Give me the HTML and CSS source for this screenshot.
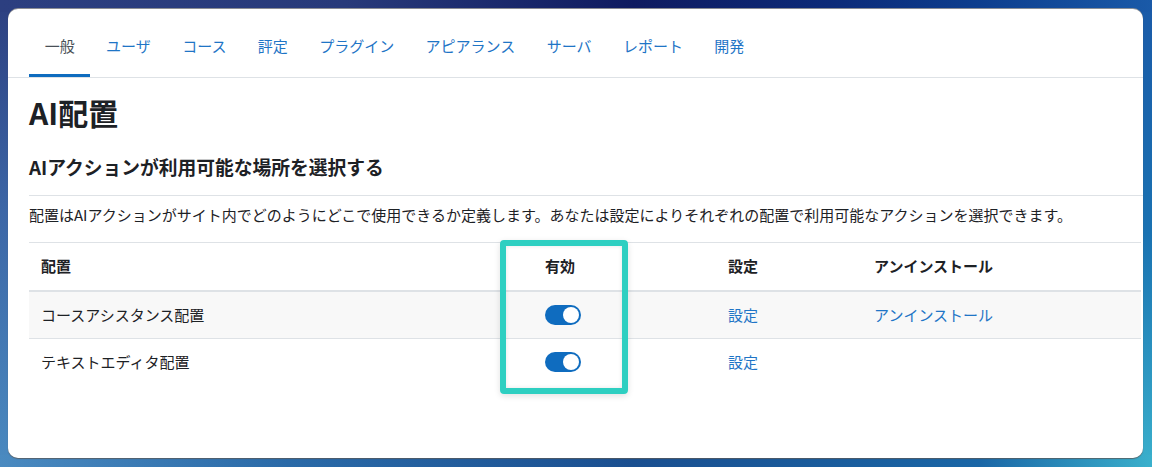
FILE: index.html
```html
<!DOCTYPE html>
<html lang="ja">
<head>
<meta charset="utf-8">
<title>AI配置</title>
<link rel="stylesheet" href="styles.css">
</head>
<body>
<div class="window">
  <nav class="tabs">
    <a class="tab active">一般</a>
    <a class="tab">ユーザ</a>
    <a class="tab">コース</a>
    <a class="tab">評定</a>
    <a class="tab">プラグイン</a>
    <a class="tab">アピアランス</a>
    <a class="tab">サーバ</a>
    <a class="tab">レポート</a>
    <a class="tab">開発</a>
  </nav>
  <main class="content">
    <h2 class="page-title">AI配置</h2>
    <h3 class="section-title">AIアクションが利用可能な場所を選択する</h3>
    <div class="desc">配置はAIアクションがサイト内でどのようにどこで使用できるか定義します。あなたは設定によりそれぞれの配置で利用可能なアクションを選択できます。</div>
    <div class="table-wrap">
      <table class="placements">
        <colgroup>
          <col class="c-name">
          <col class="c-enabled">
          <col class="c-settings">
          <col class="c-uninstall">
        </colgroup>
        <thead>
          <tr>
            <th>配置</th>
            <th class="center">有効</th>
            <th>設定</th>
            <th>アンインストール</th>
          </tr>
        </thead>
        <tbody>
          <tr class="stripe">
            <td>コースアシスタンス配置</td>
            <td class="center"><span class="switch"><span class="knob"></span></span></td>
            <td><a class="link">設定</a></td>
            <td><a class="link">アンインストール</a></td>
          </tr>
          <tr class="last">
            <td>テキストエディタ配置</td>
            <td class="center"><span class="switch"><span class="knob"></span></span></td>
            <td><a class="link">設定</a></td>
            <td></td>
          </tr>
        </tbody>
      </table>
      <div class="highlight"></div>
    </div>
  </main>
</div>
</body>
</html>
```
FILE: styles.css
```css
html, body {
  margin: 0;
  height: 467px;
  overflow: hidden;
}
body {
  box-sizing: border-box;
  padding: 9px 9px 9px 8px;
  font-family: "Noto Sans CJK JP", "Noto Sans", sans-serif;
  color: #1d2125;
  background-color: #2a5fa0;
  background-image:
    linear-gradient(90deg, #2c3f80 0%, #283a7a 30%, #0f1b60 55%, #0c2a78 72%, #0d3e8e 85%, #1a5aa8 100%),
    linear-gradient(90deg, #4a8ac0 0%, #2a6aa8 25%, #1a4f90 55%, #1a66a6 85%, #3ab0cc 100%),
    linear-gradient(180deg, #2c3f80 0%, #3c66a6 45%, #4a8ac0 100%),
    linear-gradient(180deg, #1a5aa8 0%, #1a72b2 50%, #3ab0cc 100%);
  background-size: 100% 12px, 100% 12px, 12px 100%, 12px 100%;
  background-position: top left, bottom left, left top, right top;
  background-repeat: no-repeat;
}
.window {
  box-sizing: border-box;
  height: 449px;
  background: #fff;
  border-radius: 10px;
  overflow: hidden;
  box-shadow: 0 -1px 0 rgba(150, 150, 150, 0.9), 0 1px 1px rgba(90, 90, 90, 0.8);
}

/* Tabs */
.tabs {
  display: flex;
  padding: 20px 0 0 21px;
  margin-top: 1px;
  border-bottom: 1px solid #dee2e6;
}
.tab {
  display: block;
  padding: 6px 15.7px 18px;
  font-size: 15px;
  line-height: 20px;
  color: #1f75c6;
  border-bottom: 3px solid transparent;
  white-space: nowrap;
}
.tab.active {
  color: #495057;
  border-bottom-color: #0f6cbf;
}

/* Content */
.content {
  padding-left: 21px;
}
.page-title {
  margin: 16px 0 0;
  font-size: 30px;
  line-height: 36px;
  font-weight: 700;
}
.section-title {
  margin: 25px 0 0;
  font-size: 18.75px;
  line-height: 24px;
  font-weight: 700;
}
.desc {
  margin-top: 16px;
  border-top: 1px solid #dee2e6;
  padding-top: 8px;
  font-size: 15px;
  line-height: 22px;
  white-space: nowrap;
}

/* Table */
.table-wrap {
  position: relative;
  margin-top: 16px;
}
.placements {
  width: 1112px;
  table-layout: fixed;
  border-collapse: collapse;
  font-size: 15px;
  line-height: 22px;
}
.c-name { width: 375px; }
.c-enabled { width: 312px; }
.c-settings { width: 146px; }
.c-uninstall { width: 279px; }
.placements th {
  text-align: left;
  font-weight: 700;
  padding: 12px 12px 13px;
  border-top: 1px solid #dee2e6;
  border-bottom: 2px solid #dee2e6;
  white-space: nowrap;
}
.placements td {
  height: 22px;
  padding: 12px;
  border-bottom: 1px solid #dee2e6;
  white-space: nowrap;
  vertical-align: middle;
}
.placements tr.last td {
  border-bottom: none;
}
.placements tr.stripe td {
  background: #f8f8f8;
}
.placements .center {
  text-align: center;
}
.link {
  color: #1f75c6;
}
.switch {
  display: inline-block;
  position: relative;
  width: 36px;
  height: 20px;
  margin: 1px 0 0 6px;
  border-radius: 10px;
  background: #0f6cbf;
  vertical-align: top;
}
.knob {
  position: absolute;
  top: 2px;
  right: 2px;
  width: 16px;
  height: 16px;
  border-radius: 50%;
  background: #fff;
}
.highlight {
  position: absolute;
  left: 471px;
  top: -2px;
  width: 128px;
  height: 154px;
  box-sizing: border-box;
  border: 6px solid #2ecfc1;
  border-radius: 4px;
  box-shadow: 0 2px 6px rgba(0, 0, 0, 0.12), inset 0 0 4px rgba(0, 0, 0, 0.1);
}
```
